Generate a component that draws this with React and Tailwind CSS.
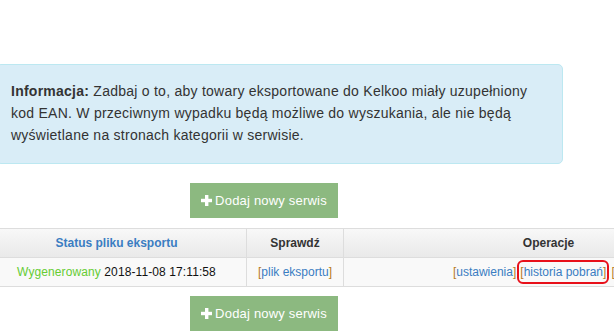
import React from "react";

function Plus() {
  return (
    <svg width="11" height="11" viewBox="0 0 11 11" className="inline-block mr-[3px] -mt-[1px] align-middle">
      <rect x="4" y="0" width="3.4" height="11" fill="#fff" />
      <rect x="0" y="3.8" width="11" height="3.4" fill="#fff" />
    </svg>
  );
}

function AddButton() {
  return (
    <div className="pl-[190px]">
      <div className="w-[148px] h-[35px] bg-[#8cb980] text-white text-[13px] tracking-[0.2px] flex items-center justify-center">
        <Plus />
        <span>Dodaj nowy serwis</span>
      </div>
    </div>
  );
}

function L({ children }) {
  return (
    <span>
      <span className="text-[#b87a1c]">[</span>
      <span className="text-[#3a7dc2]">{children}</span>
      <span className="text-[#b87a1c]">]</span>
    </span>
  );
}

export default function App() {
  return (
    <div className="w-[614px] h-[333px] overflow-hidden bg-white font-['Liberation_Sans',Arial,sans-serif]">
      <div className="pt-[64px]">
        <div className="ml-[-4px] w-[567px] rounded-[5px] border border-[#bce8f1] bg-[#d9edf7] pl-[14px] pr-[15px] pt-[15px] pb-[17px] text-[14px] leading-[22px] tracking-[0.25px] text-[#333]">
          <b>Informacja:</b> Zadbaj o to, aby towary eksportowane do Kelkoo miały uzupełniony kod EAN. W przeciwnym wypadku będą możliwe do wyszukania, ale nie będą wyświetlane na stronach kategorii w serwisie.
        </div>
        <div className="mt-[19px]">
          <AddButton />
        </div>
        <div className="mt-[10px] ml-[-13px] w-[766px]">
          <div className="grid grid-cols-[259px_97px_410px] text-[12px]">
            <div className="h-[30px] border-t border-b border-[#ddd] bg-gradient-to-b from-[#f8f8f8] to-[#e9e9e9] flex items-center justify-center font-bold text-[#3a7dc2]">Status pliku eksportu</div>
            <div className="h-[30px] border-t border-b border-l border-[#ddd] bg-gradient-to-b from-[#f8f8f8] to-[#e9e9e9] flex items-center justify-center font-bold text-[#333]">Sprawdź</div>
            <div className="h-[30px] border-t border-b border-l border-[#ddd] bg-gradient-to-b from-[#f8f8f8] to-[#e9e9e9] flex items-center justify-center font-bold text-[#333]">Operacje</div>
            <div className="h-[29px] border-b border-[#ddd] bg-[#f9f9f9] flex items-center justify-center tracking-[0.1px]">
              <span className="text-[#66cc33]">Wygenerowany</span>
              <span className="text-[#111]">&nbsp;2018-11-08 17:11:58</span>
            </div>
            <div className="h-[29px] border-b border-l border-[#ddd] bg-[#f9f9f9] flex items-center justify-center">
              <L>plik eksportu</L>
            </div>
            <div className="h-[29px] border-b border-l border-[#ddd] bg-[#f9f9f9] flex items-center justify-center whitespace-nowrap">
              <L>ustawienia</L>
              <span className="ml-[1px] inline-flex items-center h-[24px] px-[1px] border-2 border-[#e8101a] rounded-[6px]">
                <L>historia pobrań</L>
              </span>
              <span className="ml-[2px]"><L>usuń</L></span>
            </div>
          </div>
        </div>
        <div className="mt-[9px]">
          <AddButton />
        </div>
      </div>
    </div>
  );
}
